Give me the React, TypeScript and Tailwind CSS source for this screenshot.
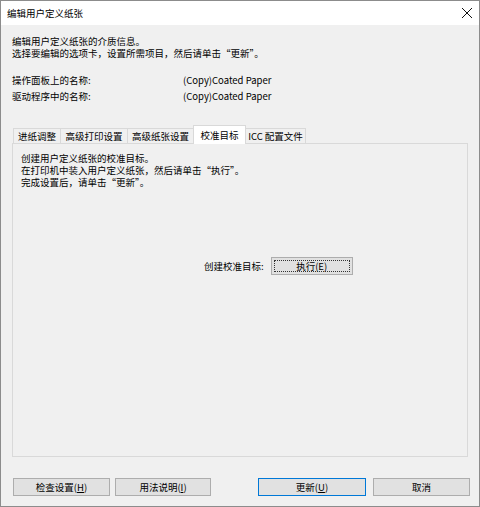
const Tab = ({ label, width, active }: { label: string; width: number; active?: boolean }) => (
  <div
    className={
      active
        ? 'relative z-10 -mb-px h-[19px] flex items-center justify-center bg-white border border-b-0 border-[#d9d9d9] -ml-px'
        : 'h-[15px] flex items-center justify-center bg-[#f0f0f0] border border-b-0 border-[#d9d9d9] -ml-px first:ml-0'
    }
    style={{ width }}
  >
    <span className="leading-[12px]">{label}</span>
  </div>
);

const Button = ({
  children,
  className = '',
  focused,
  dotted,
}: {
  children: React.ReactNode;
  className?: string;
  focused?: boolean;
  dotted?: boolean;
}) => (
  <div
    className={
      'relative shrink-0 h-[18px] flex items-center justify-center bg-[#e1e1e1] border ' +
      (focused ? 'border-[#0078d7]' : 'border-[#adadad]') +
      ' ' +
      className
    }
  >
    {dotted && <div className="absolute inset-[2px] border border-dotted border-[#333]" />}
    <span className="leading-[12px]">{children}</span>
  </div>
);

export default function App() {
  return (
    <div className="w-[480px] h-[507px] border border-[#8c8c8c] bg-[#f0f0f0] flex flex-col text-[9.5px] text-black font-['Noto_Sans_CJK_SC','Noto_Sans',sans-serif]">
      <div className="h-[24px] shrink-0 bg-white flex items-center justify-between pl-[6px] pr-[5px]">
        <span className="leading-[12px]">编辑用户定义纸张</span>
        <svg width="12" height="12" viewBox="0 0 12 12" className="mr-[1px]">
          <path d="M1 1 L11 11 M11 1 L1 11" stroke="#111" strokeWidth="1" fill="none" />
        </svg>
      </div>

      <div className="flex-1 flex flex-col px-[11px] pt-[10px] pb-[10px] min-h-0">
        <div className="leading-[12px]">
          <p>编辑用户定义纸张的介质信息。</p>
          <p>选择要编辑的选项卡，设置所需项目，然后请单击“更新”。</p>
        </div>

        <div className="mt-[13px] grid grid-cols-[171px_1fr] leading-[16px]">
          <span>操作面板上的名称:</span>
          <span>(Copy)Coated Paper</span>
          <span>驱动程序中的名称:</span>
          <span>(Copy)Coated Paper</span>
        </div>

        <div className="mt-[21px] h-[18px] flex items-end pl-[1px]">
          <Tab label="进纸调整" width={48} />
          <Tab label="高级打印设置" width={68} />
          <Tab label="高级纸张设置" width={67} />
          <Tab label="校准目标" width={53} active />
          <Tab label="ICC 配置文件" width={61} />
        </div>

        <div className="flex-1 border border-[#d9d9d9] bg-[#f0f0f0] pt-[8px] pl-[8px] flex flex-col">
          <div className="leading-[12px]">
            <p>创建用户定义纸张的校准目标。</p>
            <p>在打印机中装入用户定义纸张，然后请单击“执行”。</p>
            <p>完成设置后，请单击“更新”。</p>
          </div>
          <div className="mt-[69px] ml-[183px] flex items-center gap-[7px]">
            <span className="leading-[12px]">创建校准目标:</span>
            <Button className="w-[82px]" dotted>
              执行(E)
            </Button>
          </div>
        </div>

        <div className="mt-[21px] flex items-center pl-[1px]">
          <Button className="w-[97px]">
            检查设置(<span className="underline">H</span>)
          </Button>
          <Button className="w-[96px] ml-[5px]">
            用法说明(<span className="underline">I</span>)
          </Button>
          <Button className="w-[108px] ml-[47px]" focused>
            更新(<span className="underline">U</span>)
          </Button>
          <Button className="w-[97px] ml-[7px]">取消</Button>
        </div>
      </div>
    </div>
  );
}
